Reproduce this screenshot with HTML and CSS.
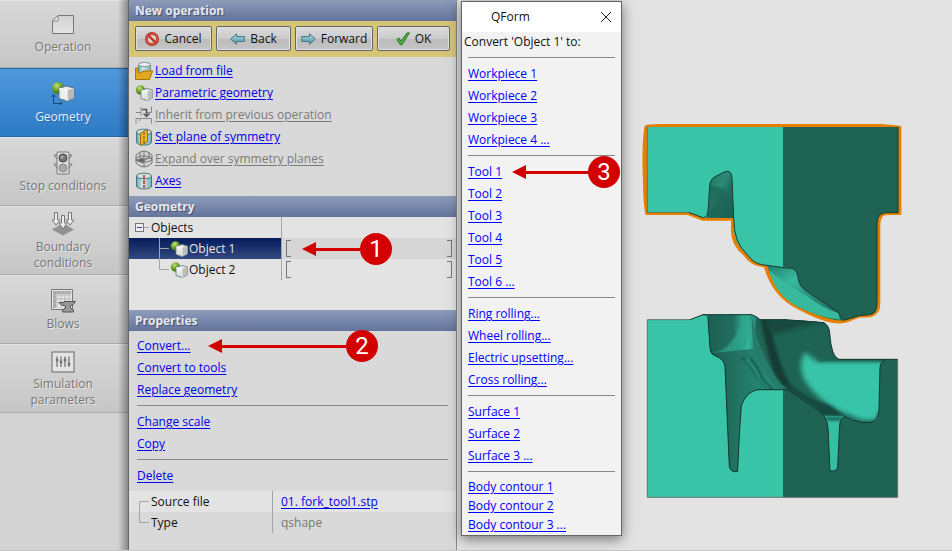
FILE: index.html
```html
<!DOCTYPE html>
<html lang="en">
<head>
<meta charset="utf-8">
<title>QForm</title>
<link rel="stylesheet" href="styles.css">
</head>
<body>
<svg class="defs" aria-hidden="true">
  <defs>
    <linearGradient id="cubeTop" x1="0" y1="0" x2="1" y2="1"><stop offset="0" stop-color="#fff"/><stop offset="1" stop-color="#c5c5c5"/></linearGradient>
    <radialGradient id="ball" cx=".4" cy=".3" r=".7"><stop offset="0" stop-color="#c4e07c"/><stop offset=".5" stop-color="#75a82c"/><stop offset="1" stop-color="#3f6d12"/></radialGradient>
    <linearGradient id="paper" x1="0" y1="0" x2="0" y2="1"><stop offset="0" stop-color="#d2d2d2"/><stop offset="1" stop-color="#e4e4e4"/></linearGradient>
    <linearGradient id="teal" x1="0" y1="0" x2="1" y2="0"><stop offset="0" stop-color="#6fa9ae"/><stop offset=".4" stop-color="#d4e6e7"/><stop offset="1" stop-color="#79b0b6"/></linearGradient>
    <linearGradient id="arrowFill" x1="0" y1="0" x2="0" y2="1"><stop offset="0" stop-color="#b6dfe6"/><stop offset="1" stop-color="#438d9c"/></linearGradient>
    <symbol id="shapes" viewBox="0 0 18 16">
      <circle cx="5.500" cy="5" r="4.700" fill="url(#ball)"/>
      <path d="M6 5.500L12 3.500L17.500 5V13L12 15.500L6 13.500Z" fill="url(#cubeTop)" stroke="#55777c" stroke-width=".8"/>
      <path d="M12 7L17.500 5V13L12 15.500Z" fill="#b7bfc0"/><path d="M6 5.500L12 7V15.500" fill="none" stroke="#fff" stroke-width=".7"/>
    </symbol>
    <symbol id="arrow" viewBox="0 0 15 12"><path d="M.7 6L6.500 .8V3.500H14.300V8.500H6.500V11.200Z" fill="url(#arrowFill)" stroke="#447984"/></symbol>
    <symbol id="cylinder" viewBox="0 0 18 18"><path d="M1.500 4V14C1.500 18 16.500 18 16.500 14V4Z" fill="url(#teal)" stroke="#477a80"/><ellipse cx="9" cy="4" rx="7.500" ry="2.800" fill="#d4e0e0" stroke="#477a80"/></symbol>
  </defs>
</svg>
<main class="app">
  <nav class="steps">
    <a class="step" href="#operation">
      <svg width="24" height="22" viewBox="0 0 24 22"><path d="M7 1.500H22.500V19.500H1.500V7Z" fill="url(#paper)" stroke="#777"/><path d="M7 1.500V7H1.500Z" fill="#eee" stroke="#888"/></svg>
      <span>Operation</span></a>
    <a class="step active" href="#geometry">
      <svg width="24" height="25" viewBox="0 0 24 25"><circle cx="7" cy="7" r="6" fill="url(#ball)"/><path d="M8 7.500L15 5L23 7V17L16 20L8 17.500Z" fill="#ededed" stroke="#60777d"/><path d="M16 9.500L23 7V17L16 20Z" fill="#bababa"/><path d="M8 7.500L16 9.500V20" fill="none" stroke="#fff"/><path d="M2.500 14V22.500H11M.5 16L2.500 13.500L4.500 16M9 20.500L11 22.500L9 24.500" fill="none" stroke="#174e6b"/></svg>
      <span>Geometry</span></a>
    <a class="step" href="#stop">
      <svg width="20" height="24" viewBox="0 0 20 24"><path d="M4 4H1L4 8M16 4H19L16 8M4 13H1L4 17M16 13H19L16 17" fill="#ddd" stroke="#777"/><rect x="4" y="1" width="12" height="22" rx="1" fill="#ddd" stroke="#777"/><circle cx="10" cy="7" r="4" fill="#777" stroke="#444"/><circle cx="9" cy="6" r="1.500" fill="#aaa"/><circle cx="10" cy="17" r="4" fill="#aaa" stroke="#888"/></svg>
      <span>Stop conditions</span></a>
    <a class="step" href="#boundary">
      <svg width="24" height="25" viewBox="0 0 24 25"><path d="M12 12L23 18.500L12 24.500L1 18.500Z" fill="#929292"/><g fill="#eee" stroke="#777"><path d="M3.500 1.500H6.500V9H9L5 14L1 9H3.500Z"/><path d="M17.500 1.500H20.500V9H23L19 14L15 9H17.500Z"/><path d="M10.500 4.500H13.500V12H16L12 18L8 12H10.500Z"/></g></svg>
      <span>Boundary conditions</span></a>
    <a class="step" href="#blows">
      <svg width="26" height="25" viewBox="0 0 26 25"><path d="M1.500 1.500H22.500V21.500H1.500Z" fill="#e4e4e4" stroke="#777"/><path d="M3 3H21V6H3ZM3 3H6V20H3Z" fill="#aaa"/><path d="M3 7H21M3 11H21M3 15H21M7 3V20M11 3V20M15 3V20M19 3V20" stroke="#bbb"/><path d="M9 14.500H14V13.500H25.500Q24 17 20.500 17.500V20L23.500 22V24H12.500V22L15.500 20V18Q11 18 9 14.500Z" fill="#999" stroke="#555"/></svg>
      <span>Blows</span></a>
    <a class="step" href="#simulation">
      <svg width="24" height="22" viewBox="0 0 24 22"><rect x="1" y="1" width="22" height="20" fill="#e4e4e4" stroke="#666"/><path d="M6 5.500V16M10 5.500V16M14 5.500V16M18 5.500V16" stroke="#555"/><g fill="#ddd" stroke="#555"><circle cx="6" cy="9" r="1"/><circle cx="10" cy="11" r="1"/><circle cx="14" cy="9" r="1"/><circle cx="18" cy="13" r="1"/></g></svg>
      <span>Simulation parameters</span></a>
  </nav>

  <section class="panel">
    <h2 class="bar">New operation</h2>
    <div class="toolbar">
      <button type="button"><svg width="14" height="14" viewBox="0 0 14 14"><circle cx="7" cy="7" r="5.500" fill="#e4ddda" stroke="#a93123" stroke-width="3"/><circle cx="7" cy="7" r="5.500" fill="none" stroke="#d65645" stroke-width="1.500"/><path d="M3 3L11 11" stroke="#c13e2f" stroke-width="2.600"/></svg>Cancel</button>
      <button type="button"><svg width="15" height="12"><use href="#arrow"/></svg>Back</button>
      <button type="button"><svg class="flip" width="15" height="12"><use href="#arrow"/></svg>Forward</button>
      <button type="button"><svg width="14" height="14" viewBox="0 0 14 14"><path d="M.8 7.500L3 6L5 9L11 1L13.500 .8L6 12.800H4.500Z" fill="#4fae3c" stroke="#2b7a23"/></svg>OK</button>
    </div>
    <ul class="actions">
      <li><svg width="18" height="18" viewBox="0 0 18 18"><path d="M3.500 3V12H15.500V3Z" fill="url(#teal)"/><ellipse cx="9.500" cy="2.500" rx="6" ry="2" fill="#eef2f2" stroke="#749397"/><path d="M3.500 3V11M15.500 3V10" stroke="#749397"/><path d="M.5 6V17.500H14.500L17.500 9H8L6 11H3V6Z" fill="#e2a81d" stroke="#a87508"/></svg><a href="#load">Load from file</a></li>
      <li><svg width="18" height="18"><use href="#shapes"/></svg><a href="#parametric">Parametric geometry</a></li>
      <li class="off"><svg width="18" height="18" viewBox="0 0 18 18" fill="none" stroke="#888"><path d="M1 6.500H6V1M16.500 .5V6.500H11M1 17.500V12.500H16.500V17.500M6 6.500V9.500M6 12.500L4 15"/><path d="M7 3.500H11.500V11M8.500 7.500L11.500 10.500L14.500 7.500" stroke="#555" stroke-width="1.500"/></svg><a href="#inherit">Inherit from previous operation</a></li>
      <li><svg width="18" height="18" viewBox="0 0 18 18"><use href="#cylinder"/><path d="M5.500 5L12.500 1.500V14L5.500 17.500Z" fill="#e8b428" stroke="#977313"/><path d="M9 4V15" stroke="#775c12" stroke-dasharray="3 1"/></svg><a href="#symmetry">Set plane of symmetry</a></li>
      <li class="off"><svg width="18" height="18" viewBox="0 0 18 18" fill="none" stroke="#777"><path d="M1 5Q9 -3 17 5V13Q9 21 1 13Z" fill="#d3d3d3"/><ellipse cx="9" cy="9" rx="8" ry="3"/><path d="M9 1V17M5 2V9L9 11L14 7V2M1 10L17 8"/><path d="M8.500 8L1.500 10.500L8.500 13Z" fill="#666"/></svg><a href="#expand">Expand over symmetry planes</a></li>
      <li><svg width="18" height="18" viewBox="0 0 18 18"><use href="#cylinder"/><path d="M9 3V16" stroke="#c02d20" stroke-width="1.500" stroke-dasharray="4 1"/></svg><a href="#axes">Axes</a></li>
    </ul>

    <h2 class="bar">Geometry</h2>
    <div class="tree">
      <table>
        <tbody>
          <tr><th scope="row"><div class="node"><svg width="15" height="21" viewBox="0 0 15 21" fill="none"><rect x=".5" y="6.500" width="8" height="8" fill="#eee" stroke="#777"/><path d="M2 10.500H7" stroke="#334a88"/><path d="M9 10.500H14" stroke="#a5a5a5"/></svg>Objects</div></th><td></td></tr>
          <tr class="selected"><th scope="row"><div class="node deep"><svg width="10" height="21"><path d="M.5 0V21M.5 10.500H10" fill="none" stroke="#a5a5a5"/></svg><svg width="18" height="16"><use href="#shapes"/></svg>Object 1</div></th>
            <td><span class="range"></span><span class="callout geometry-mark"><svg width="14" height="14"><path d="M0 7L14 0V14Z"/></svg><i></i><b>1</b></span></td></tr>
          <tr><th scope="row"><div class="node deep"><svg width="10" height="21"><path d="M.5 0V10.500H10" fill="none" stroke="#a5a5a5"/></svg><svg width="18" height="16"><use href="#shapes"/></svg>Object 2</div></th><td><span class="range"></span></td></tr>
        </tbody>
      </table>
    </div>

    <h2 class="bar">Properties</h2>
    <div class="properties">
      <ul class="links">
        <li><a href="#convert">Convert...</a><span class="callout convert-mark"><svg width="14" height="14"><path d="M0 7L14 0V14Z"/></svg><i></i><b>2</b></span></li>
        <li><a href="#tools">Convert to tools</a></li>
        <li><a href="#replace">Replace geometry</a></li>
      </ul>
      <hr>
      <ul class="links"><li><a href="#scale">Change scale</a></li><li><a href="#copy">Copy</a></li></ul>
      <hr>
      <ul class="links"><li><a href="#delete">Delete</a></li></ul>
    </div>
    <table class="details">
      <tbody>
        <tr><th scope="row"><svg class="branch" width="10" height="21"><path d="M.5 21V10.500H10" fill="none" stroke="#a5a5a5"/></svg>Source file</th><td><a href="#source">01. fork_tool1.stp</a></td></tr>
        <tr><th scope="row"><svg class="branch" width="10" height="21"><path d="M.5 0V10.500H10" fill="none" stroke="#a5a5a5"/></svg>Type</th><td>qshape</td></tr>
      </tbody>
    </table>
  </section>

  <section class="scene">
    <svg width="275" height="390" viewBox="0 0 825 1170" role="img" aria-label="Forging tools">
      <defs>
        <linearGradient id="pocket" x1="0" y1="0" x2="1" y2="1"><stop offset="0" stop-color="#1d6556"/><stop offset=".4" stop-color="#2c8c77"/><stop offset=".6" stop-color="#217061"/><stop offset="1" stop-color="#1d6153"/></linearGradient>
        <linearGradient id="lip" x1="0" y1="0" x2="1" y2="1"><stop offset="0" stop-color="#238070"/><stop offset=".3" stop-color="#38b99d"/><stop offset=".6" stop-color="#298b77"/><stop offset="1" stop-color="#1d6555"/></linearGradient>
        <linearGradient id="wall" x1="0" y1="0" x2="1" y2="0"><stop offset="0" stop-color="#1d6153"/><stop offset=".5" stop-color="#206e5f"/><stop offset=".78" stop-color="#38bfa3"/><stop offset="1" stop-color="#237766"/></linearGradient>
        <linearGradient id="leg" x1="0" y1="0" x2="1" y2="0"><stop offset="0" stop-color="#1c5b4e"/><stop offset=".45" stop-color="#237968"/><stop offset="1" stop-color="#2b9580"/></linearGradient>
        <filter id="soft" x="-20%" y="-20%" width="140%" height="140%"><feGaussianBlur stdDeviation="8"/></filter>
        <filter id="slight" filterUnits="userSpaceOnUse" x="0" y="560" width="825" height="610"><feGaussianBlur stdDeviation="3"/></filter>
        <clipPath id="hollow"><path d="M219 599H350Q366 604 375 614H450Q530 617 567 623Q583 633 584 655Q589 727 612 733H755Q738 736 735 757L732 884Q730 922 708 922H680Q650 917 629 904L566 902Q556 880 459 825L444 824H369Q334 829 319 872Q312 960 308 1069Q288 1074 283 1055L270 755Q268 732 240 722Q224 717 225 700Q220 640 219 599Z"/></clipPath>
      </defs>
      <path d="M37 614H165L204 599H350L375 614H444V1147H37Z" fill="#39c4a8"/>
      <path d="M444 614H450Q530 617 567 623Q583 633 584 655Q589 727 612 733H788V1147H444Z" fill="#1e6353"/>
      <g clip-path="url(#hollow)">
        <path d="M215 590H800V1080H215Z" fill="#1e6353"/>
        <path d="M219 590H367Q354 660 370 710L302 730L220 720Z" fill="url(#wall)"/>
        <path d="M225 716Q300 710 328 590H350Q350 680 320 724Z" fill="#2fa48b" filter="url(#slight)" opacity=".8"/>
        <path d="M225 715L370 700L450 830H369L300 1080H270Z" fill="url(#leg)"/>
        <path d="M348 590Q364 675 394 736Q420 796 462 824L430 827Q370 755 355 700Z" fill="#257c6a"/>
        <path d="M375 600Q392 700 415 765Q430 803 461 824L476 832Q430 745 410 650L400 610Z" fill="#123e34" filter="url(#slight)"/>
        <path d="M380 612H450L569 622Q500 631 420 658Z" fill="#14463b" filter="url(#soft)"/>
        <path d="M510 712Q488 747 506 790Q540 850 615 889L680 914Q714 922 760 900V740H548Q530 731 510 712Z" fill="#39c4a8" filter="url(#soft)"/>
        <path d="M545 752H728L724 880Q716 902 690 904Q630 890 560 820Q530 780 528 755Z" fill="#39c4a8" filter="url(#slight)"/>
        <path d="M550 733H755" stroke="#1e6353" stroke-width="10" filter="url(#slight)"/>
        <path d="M629 905Q650 917 680 922H708Q726 922 731 890" fill="none" stroke="#258471" stroke-width="8" filter="url(#slight)"/>
        <path d="M320 728Q343 739 364 780Q386 815 415 824M345 729Q369 758 383 793L412 822" fill="none" stroke="#175346" stroke-width="6" filter="url(#slight)"/>
        <path d="M334 733Q363 762 375 794L404 821" fill="none" stroke="#36ad93" stroke-width="4" filter="url(#slight)"/>
        <path d="M459 825Q520 859 566 900L629 903L582 870Q510 850 459 800Z" fill="#17493f" filter="url(#slight)"/>
      </g>
      <path d="M566 902L629 904Q615 912 614 930L608 1054Q607 1070 585 1068L579 940Q578 918 566 902Z" fill="#36bea2"/>
      <path d="M570 904H624L616 918H578Z" fill="#1e7463" filter="url(#slight)"/>
      <path d="M165 614L204 599Q218 597 219 610L225 695Q225 713 240 722Q268 732 270 755L283 1055Q288 1074 308 1069Q312 960 319 872Q334 829 369 824H444L459 825L550 886Q577 903 579 940L585 1068Q607 1070 608 1054L614 930Q615 912 629 904Q650 917 680 922H708Q730 920 732 884L735 757Q738 736 755 733H788M204 599H350Q366 604 375 614H450L567 623Q583 633 584 655Q589 727 612 733H755" fill="none" stroke="#10372e" stroke-width="3"/>
      <path d="M165 614H37V1147H788V733" fill="none" stroke="#62746f" stroke-width="3"/>
      <g stroke-linejoin="round">
        <path d="M36 33L32 36Q23 100 28 200Q29 270 35 296H160L202 313H292V348Q293 390 327 417Q350 451 390 453Q416 547 496 582Q590 631 634 619L672 604L706 603Q732 595 732 566V326Q734 297 753 296H795V36L740 31H70Z" fill="#e67e00" stroke="#e67e00" stroke-width="8"/>
        <path d="M37 36H444V458Q393 450 380 449Q355 444 335 417Q296 387 296 331V308H206L160 292H37Z" fill="#39c4a8"/>
        <path d="M444 36H789V293H752Q728 294 726 324V566Q726 598 702 599L672 602Q649 611 630 616Q615 613 613 598L520 532Q492 516 490 494Q488 466 470 459L444 457Z" fill="#1e6353"/>
        <path d="M214 308Q222 295 221 270L224 211Q226 190 244 183L270 170Q290 164 291 190L296 309Z" fill="url(#pocket)"/>
        <path d="M240 213Q278 219 295 270V309H215Q225 270 224 215Z" fill="#1d6254" opacity=".65"/>
        <path d="M397 452L444 457L472 460Q488 466 490 494Q494 517 520 532L607 590Q618 602 626 616Q590 620 496 579Q421 540 397 452Z" fill="url(#lip)"/>
        <path d="M402 465Q450 509 515 542Q562 579 610 594L615 614Q560 609 496 579Q421 543 402 465Z" fill="#36b99d"/>
        <path d="M160 292L206 309Q219 304 219 286L225 204Q230 188 244 183L270 170Q290 164 291 190L296 309Q296 382 335 417Q355 445 380 449L444 458L472 460Q488 466 490 494Q494 517 520 532L607 590Q618 602 626 616L672 602L702 599Q726 598 726 566V324Q728 294 752 293H789V36" fill="none" stroke="#123b33" stroke-width="3"/>
        <path d="M37 36V292H160" fill="none" stroke="#247869" stroke-width="2"/>
      </g>
    </svg>
  </section>

  <section class="dialog" role="dialog" aria-labelledby="dialog-title">
    <header><h1 id="dialog-title">QForm</h1><button type="button" aria-label="Close"><svg width="12" height="12" viewBox="0 0 12 12"><path d="M1 1L11 11M11 1L1 11" fill="none" stroke="#222"/></svg></button></header>
    <p>Convert 'Object 1' to:</p>
    <div class="choices">
      <hr>
      <ul class="links"><li><a href="#w1">Workpiece 1</a></li><li><a href="#w2">Workpiece 2</a></li><li><a href="#w3">Workpiece 3</a></li><li><a href="#w4">Workpiece 4 ...</a></li></ul>
      <hr>
      <ul class="links"><li><a href="#t1">Tool 1</a><span class="callout tool-mark"><svg width="14" height="14"><path d="M0 7L14 0V14Z"/></svg><i></i><b>3</b></span></li><li><a href="#t2">Tool 2</a></li><li><a href="#t3">Tool 3</a></li><li><a href="#t4">Tool 4</a></li><li><a href="#t5">Tool 5</a></li><li><a href="#t6">Tool 6 ...</a></li></ul>
      <hr>
      <ul class="links"><li><a href="#ring">Ring rolling...</a></li><li><a href="#wheel">Wheel rolling...</a></li><li><a href="#electric">Electric upsetting...</a></li><li><a href="#cross">Cross rolling...</a></li></ul>
      <hr>
      <ul class="links"><li><a href="#s1">Surface 1</a></li><li><a href="#s2">Surface 2</a></li><li><a href="#s3">Surface 3 ...</a></li></ul>
      <hr>
      <ul class="links tight"><li><a href="#b1">Body contour 1</a></li><li><a href="#b2">Body contour 2</a></li><li><a href="#b3">Body contour 3 ...</a></li></ul>
    </div>
  </section>
</main>
</body>
</html>
```
FILE: styles.css
```css
* { box-sizing: border-box; }
body { margin: 0; font: 12px/22px "Open Sans", "Noto Sans", sans-serif; color: #111; }
h1, h2, p, ul { margin: 0; padding: 0; }
ul { list-style: none; }
a { color: #0000e6; text-decoration: underline; text-underline-offset: 2px; }
svg { flex: none; }
.defs { position: absolute; width: 0; height: 0; }
.app { position: relative; display: grid; grid-template-columns: 129px 328px 1fr; min-height: 100vh; background: #e3e3e3; border-bottom: 1px solid #c8c8c8; }

.steps { position: relative; background: #d3d3d3; border-right: 1px solid #666; }
.steps::after { content: ""; position: absolute; top: 0; right: 0; bottom: 0; width: 10px; background: linear-gradient(90deg, transparent, rgba(0, 0, 0, .35)); }
.step { display: flex; flex-direction: column; align-items: center; justify-content: center; gap: 3px; height: 69px; padding: 1px 17px 0 15px; border-top: 1px solid #e5e5e5; border-bottom: 1px solid #aaa; background: linear-gradient(#d8d8d8, #c6c6c6); color: #777; line-height: 16px; text-align: center; text-decoration: none; text-shadow: 1px 1px #e6e6e6; }
.step:first-child { height: 68px; }
.step.active { border-color: #2368ac; background: linear-gradient(#5098dc, #2d7ac5); color: #e8eff6; text-shadow: 1px 1px #286aa8; }
.step span { max-width: 94px; }

.panel { display: flex; flex-direction: column; min-width: 0; background: #d9d9d9; border-right: 1px solid #888; }
.bar { height: 21px; padding: 0 6px; background: linear-gradient(#8e9cba, #63749b); color: #e8e8e8; font-size: 12px; font-weight: 700; line-height: 21px; text-shadow: 1px 1px #46557a; }
.toolbar { display: grid; grid-template-columns: 77fr 75fr 78fr 73fr; gap: 4px; padding: 5px 6px 6px; background: #d6c477; }
.toolbar button { display: flex; align-items: center; justify-content: center; gap: 5px; height: 25px; padding: 0; border: 1px solid #666; border-radius: 2px; background: linear-gradient(#dcdcdc, #cacaca 50%, #bbb 50%, #c5c5c5); box-shadow: inset 0 0 0 1px #e0e0e0; color: #111; font: inherit; }
.flip { transform: scaleX(-1); }
.actions { padding: 3px 6px 4px; }
.actions li { display: flex; align-items: center; gap: 2px; height: 22px; }
.actions .off a { color: #7b7b7b; }

table { width: 100%; border-collapse: separate; border-spacing: 0; table-layout: fixed; line-height: 21px; }
th, td { height: 21px; padding: 0; font-weight: 400; text-align: left; }
.tree { height: 93px; background: #e3e3e3; }
.tree th { width: 152px; }
.node { display: flex; align-items: center; gap: 1px; padding-left: 6px; }
.node.deep { padding-left: 30px; }
.tree td { position: relative; border-left: 1px solid #a5a5a5; padding: 0 4px; }
.tree .selected th { background: linear-gradient(#061b5b, #334980); color: #e8e8e8; }
.tree .selected td { background: #d6d6d6; }
.range { display: flex; justify-content: space-between; }
.range::before, .range::after { content: ""; width: 4px; height: 15px; border: 1px solid #777; }
.range::before { border-right: 0; }
.range::after { border-left: 0; }

.properties { padding: 4px 8px; }
hr { height: 1px; margin: 4px 0 5px; border: 0; background: #888; }
.links li { position: relative; height: 22px; }
.links.tight li { height: 19px; line-height: 19px; }
.details th { width: 144px; padding-left: 10px; border-right: 1px solid #a5a5a5; }
.details td { padding-left: 8px; color: #777; }
.details tr:first-child { background: #e3e3e3; }
.details .branch { float: left; margin-right: 2px; }

.scene { padding: 115px 0 0 178px; }
.scene svg { display: block; }

.dialog { position: absolute; top: 1px; left: 461px; width: 161px; border: 1px solid #666; background: #f2f2f2; box-shadow: 0 3px 12px rgba(0, 0, 0, .5); }
.dialog header { display: flex; align-items: center; justify-content: space-between; height: 30px; padding: 0 7px 0 29px; background: #fff; }
.dialog h1 { font-size: 12px; font-weight: 400; }
.dialog button { display: flex; padding: 2px; border: 0; background: none; }
.dialog p { height: 20px; padding-left: 2px; line-height: 20px; }
.choices { padding: 1px 6px 1px; }
.choices a { color: #00f; }

.callout { position: absolute; z-index: 2; display: flex; align-items: center; height: 32px; }
.callout path { fill: #d20000; }
.callout i { flex: 1; height: 3px; background: #d20000; }
.callout b { width: 32px; border-radius: 50%; background: #d20000; color: #fff; font: 24px/32px Roboto, sans-serif; text-align: center; }
.geometry-mark { top: -5px; left: 20px; width: 90px; }
.convert-mark { top: -5px; left: 71px; width: 170px; }
.tool-mark { top: -5px; left: 44px; width: 108px; }
```
